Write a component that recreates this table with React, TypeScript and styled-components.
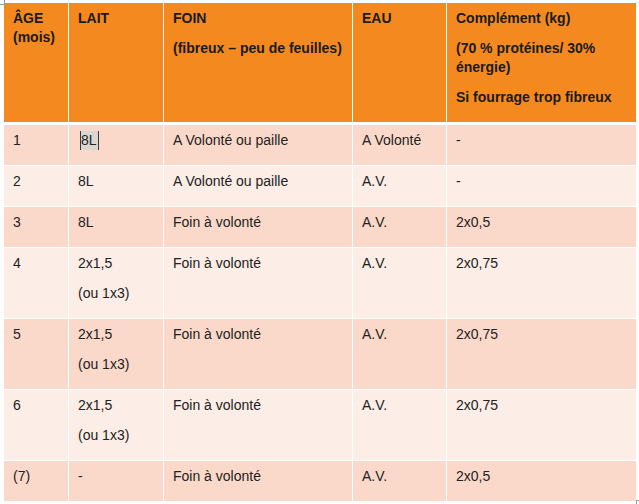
import React from 'react';
import styled, { createGlobalStyle } from 'styled-components';

const GlobalStyle = createGlobalStyle`
  html, body {
    margin: 0;
    padding: 0;
    background: #ffffff;
  }
  body {
    font-family: "Liberation Sans", Arial, sans-serif;
    color: #1c1c1c;
  }
`;

const COLUMNS = '64px 94px 188px 93px 189px';

const Page = styled.div`
  position: relative;
  width: 639px;
  height: 504px;
  padding: 3px 0 0 4px;
  box-sizing: border-box;
  overflow: hidden;
`;

const Table = styled.div`
  display: flex;
  flex-direction: column;
  gap: 1px;
  width: 632px;
  background: #ffffff;
`;

const Row = styled.div<{ $variant: 'head' | 'odd' | 'even' }>`
  display: grid;
  grid-template-columns: ${COLUMNS};
  column-gap: 1px;
  margin-bottom: ${p => (p.$variant === 'head' ? '2px' : '0')};

  & > div {
    background: ${p =>
      p.$variant === 'head' ? '#f48a1f' : p.$variant === 'odd' ? '#fbd9ca' : '#fcede6'};
    font-weight: ${p => (p.$variant === 'head' ? 700 : 400)};
    color: ${p => (p.$variant === 'head' ? '#1a1a1a' : '#222222')};
  }
`;

const Cell = styled.div`
  padding: 6px 9px 4px 9px;
  font-size: 14px;
  line-height: 19px;
`;

const Para = styled.p`
  margin: 0 0 11px;
`;

const Selected = styled.span`
  display: inline-block;
  margin-left: 2px;
  padding: 0 1px 0 0;
  background: #dcd6d3;
  border-left: 1px solid #3a3a3a;
  border-right: 1px solid #3a3a3a;
  line-height: 19px;
`;

const MoveHandle = styled.div`
  position: absolute;
  left: -2px;
  top: -2px;
  width: 5px;
  height: 5px;
  border: 1px solid #9a9a9a;
  background: #ffffff;
`;

const ResizeHandle = styled.div`
  position: absolute;
  left: 636px;
  top: 500px;
  width: 3px;
  height: 3px;
  border: 1px solid #9a9a9a;
  background: #ffffff;
`;

type Line = React.ReactNode;

const rows: Line[][][] = [
  [['1'], [<Selected key="s">8L</Selected>], ['A Volonté ou paille'], ['A Volonté'], ['-']],
  [['2'], ['8L'], ['A Volonté ou paille'], ['A.V.'], ['-']],
  [['3'], ['8L'], ['Foin à volonté'], ['A.V.'], ['2x0,5']],
  [['4'], ['2x1,5', '(ou 1x3)'], ['Foin à volonté'], ['A.V.'], ['2x0,75']],
  [['5'], ['2x1,5', '(ou 1x3)'], ['Foin à volonté'], ['A.V.'], ['2x0,75']],
  [['6'], ['2x1,5', '(ou 1x3)'], ['Foin à volonté'], ['A.V.'], ['2x0,75']],
  [['(7)'], ['-'], ['Foin à volonté'], ['A.V.'], ['2x0,5']],
];

const header: Line[][] = [
  ['ÂGE (mois)'],
  ['LAIT'],
  ['FOIN', '(fibreux – peu de feuilles)'],
  ['EAU'],
  ['Complément (kg)', '(70 % protéines/ 30% énergie)', 'Si fourrage trop fibreux'],
];

const renderCell = (lines: Line[], i: number) => (
  <Cell key={i}>
    {lines.map((l, j) => (
      <Para key={j}>{l}</Para>
    ))}
  </Cell>
);

export default function App() {
  return (
    <>
      <GlobalStyle />
      <Page>
        <MoveHandle />
        <Table>
          <Row $variant="head">{header.map(renderCell)}</Row>
          {rows.map((r, i) => (
            <Row key={i} $variant={i % 2 === 0 ? 'odd' : 'even'}>
              {r.map(renderCell)}
            </Row>
          ))}
        </Table>
        <ResizeHandle />
      </Page>
    </>
  );
}
